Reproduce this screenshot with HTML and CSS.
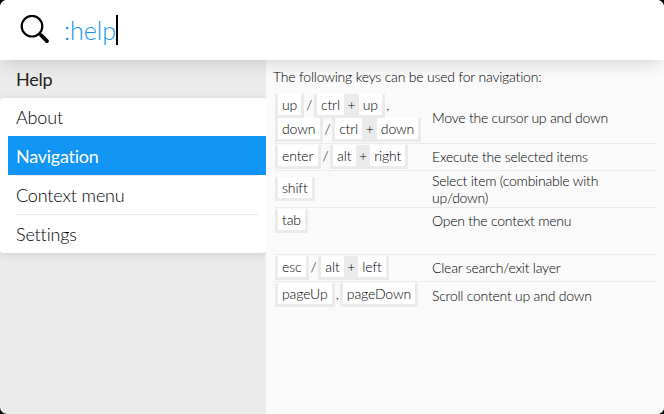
FILE: index.html
```html
<!DOCTYPE html>
<html lang="en">
<head>
<meta charset="utf-8">
<title>Help</title>
<link rel="stylesheet" href="styles.css">
</head>
<body>
<div class="window">
  <header class="search">
    <svg class="search-icon" viewBox="0 0 30 30" width="30" height="30" fill="none" stroke="#000">
      <circle cx="12" cy="11.2" r="10.3" stroke-width="2.2"/>
      <path d="M19 18.2l1.5 1.5" stroke-width="2.2"/>
      <path d="M21 20.2l6 5.9" stroke-width="3.8" stroke-linecap="round"/>
    </svg>
    <span class="query">:help</span><span class="caret"></span>
  </header>
  <main class="panes">
    <nav class="sidebar">
      <h1 class="heading">Help</h1>
      <ul class="menu">
        <li><span>About</span></li>
        <li class="active"><span>Navigation</span></li>
        <li><span>Context menu</span></li>
        <li><span>Settings</span></li>
      </ul>
    </nav>
    <section class="content">
      <p class="intro">The following keys can be used for navigation:</p>
      <div class="row row-double">
        <div class="keys">
          <div class="line"><span class="key"><kbd>up</kbd></span><i>/</i><span class="key"><kbd>ctrl</kbd><b>+</b><kbd>up</kbd></span><em>,</em></div>
          <div class="line"><span class="key"><kbd>down</kbd></span><i>/</i><span class="key"><kbd>ctrl</kbd><b>+</b><kbd>down</kbd></span></div>
        </div>
        <p>Move the cursor up and down</p>
      </div>
      <div class="row">
        <div class="keys"><div class="line"><span class="key"><kbd>enter</kbd></span><i>/</i><span class="key"><kbd>alt</kbd><b>+</b><kbd>right</kbd></span></div></div>
        <p>Execute the selected items</p>
      </div>
      <div class="row row-wrap">
        <div class="keys"><div class="line"><span class="key"><kbd>shift</kbd></span></div></div>
        <p>Select item (combinable with up/down)</p>
      </div>
      <div class="row row-tall">
        <div class="keys"><div class="line"><span class="key"><kbd>tab</kbd></span></div></div>
        <p>Open the context menu</p>
      </div>
      <div class="row">
        <div class="keys"><div class="line"><span class="key"><kbd>esc</kbd></span><i>/</i><span class="key"><kbd>alt</kbd><b>+</b><kbd>left</kbd></span></div></div>
        <p>Clear search/exit layer</p>
      </div>
      <div class="row row-last">
        <div class="keys"><div class="line"><span class="key"><kbd>pageUp</kbd></span><em>,</em><span class="key"><kbd>pageDown</kbd></span></div></div>
        <p>Scroll content up and down</p>
      </div>
    </section>
  </main>
</div>
</body>
</html>
```
FILE: styles.css
```css
* { box-sizing: border-box; margin: 0; padding: 0; }
body { background: #000; font-family: Lato, sans-serif; font-weight: 300; color: #000; overflow: hidden; }
.window { width: 664px; height: 414px; border-radius: 7px; overflow: hidden; background: #ebebeb; display: flex; flex-direction: column; }
.search { position: relative; flex: none; height: 60px; background: #fff; display: flex; align-items: center; padding-left: 20px; box-shadow: 0 4px 20px -4px rgba(0, 0, 0, .2); }
.search-icon { flex: none; margin-right: 14px; }
.query { font-size: 25px; line-height: 30px; color: #1195f5; margin-top: -1px; }
.caret { width: 2px; height: 30px; background: #000; }
.panes { flex: 1; display: flex; }
.sidebar { width: 266px; }
.heading { font-size: 18px; font-weight: 400; letter-spacing: -.2px; color: #222; line-height: 38px; height: 38px; padding-left: 16px; }
.menu { list-style: none; height: 155px; background: #fff; border-radius: 3px; box-shadow: 0 2px 8px rgba(0, 0, 0, .1); }
.menu li { height: 39px; margin-left: 8px; padding: 0 8px; font-size: 18px; line-height: 38px; letter-spacing: -.15px; }
.menu li:first-child { height: 38px; }
.menu span { display: block; height: 100%; border-top: 1px solid #ebebeb; }
.menu li:first-child span { border: 0; }
.menu .active { background: #1195f5; color: #fff; font-weight: 400; letter-spacing: -.25px; }
.menu .active span { border-color: #1195f5; }
.content { flex: 1; background: #fafafa; padding: 8px 8px 0; font-size: 14px; line-height: 17px; letter-spacing: -.2px; }
.intro { line-height: 18px; height: 26px; margin-left: -1px; }
.row { height: 27px; padding-top: 1px; border-bottom: 1px solid #ebebeb; display: grid; grid-template-columns: 157px 1fr; align-items: center; }
.row p { padding: 0 20px 2px 1px; letter-spacing: -.23px; }
.row-double { height: 50px; padding-top: 0; }
.row-wrap { height: 37px; }
.row-tall { height: 47px; align-items: start; }
.row-tall p { padding-top: 3px; }
.row-last { border-bottom: 0; }
.keys { padding-left: 1px; align-self: start; }
.row-wrap .keys { padding-top: 5px; }
.line { display: flex; height: 24px; white-space: nowrap; }
.key { display: flex; height: 24px; border: solid #ebebeb; border-width: 0 3px 3px; background: #ebebeb; }
.key kbd { font: inherit; letter-spacing: -.13px; line-height: 22px; height: 21px; padding: 0 4.3px 0 4px; background: #fff; }
.key b { font-weight: 300; line-height: 22px; width: 14.5px; text-align: center; }
.line i { font-style: normal; line-height: 22px; width: 9.5px; text-align: center; }
.line em { font-style: normal; line-height: 22px; width: 5px; padding-left: 1px; }
```
